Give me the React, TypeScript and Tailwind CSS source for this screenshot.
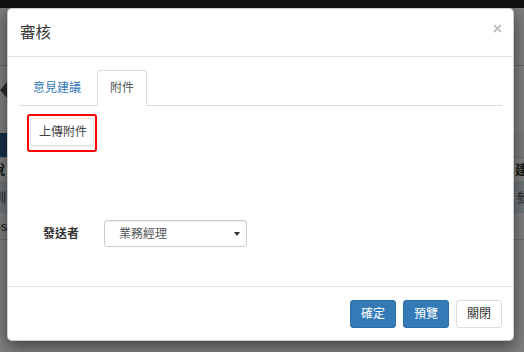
const tabs = [
  { label: '意見建議', active: false },
  { label: '附件', active: true },
];

const footerButtons = [
  { label: '確定', primary: true },
  { label: '預覽', primary: true },
  { label: '關閉', primary: false },
];

// page behind the dialog, only the edges of it show through the backdrop
function Backdrop() {
  return (
    <div className="flex h-full flex-col bg-white text-[13px] text-[#333]">
      <div className="h-[8px] bg-[#222]" />
      <div className="h-[58px] border-b border-[#ccc] bg-[#f8f8f8]" />
      <div className="flex h-[67px] items-start pt-[16px]">
        <div className="h-0 w-0 border-y-[8px] border-r-[7px] border-y-transparent border-r-[#555]" />
      </div>
      <div className="flex h-[25px] border-b border-[#ddd]">
        <div className="w-[14px] bg-[#2a5f8f]" />
        <div className="flex-1 bg-[#f5f5f5]" />
      </div>
      <div className="flex h-[23px] items-center justify-between font-bold leading-none">
        <span className="-ml-[8px]">說</span>
        <span className="-mr-[4px]">建</span>
      </div>
      <div className="flex h-[32px] items-center justify-between bg-[#dcebf3] leading-none text-[#555]">
        <span className="-ml-[7px]">訓</span>
        <span className="-mr-[5px]">參</span>
      </div>
      <div className="flex h-[27px] items-center border-b border-[#ddd] leading-none">
        <span className="-ml-[14px]">Yes</span>
      </div>
    </div>
  );
}

export default function App() {
  return (
    <div className="relative h-[352px] w-[524px] overflow-hidden font-['Liberation_Sans','Noto_Sans_CJK_TC',sans-serif]">
      <Backdrop />
      <div className="absolute inset-0 bg-black/50" />

      <div className="absolute inset-0 pl-[7px] pt-[8px]">
        <div className="flex h-[333px] w-[507px] flex-col rounded-[5px] border border-black/20 bg-white shadow-[0_5px_15px_rgba(0,0,0,0.5)]">
          {/* header */}
          <div className="flex h-[48px] shrink-0 items-center justify-between border-b border-[#e5e5e5] pl-[12px] pr-[11px]">
            <h4 className="text-[15.5px] leading-none text-[#333]">審核</h4>
            <svg width="9" height="9" viewBox="0 0 9 9" className="-mt-[8px]">
              <path d="M1 1L8 8M8 1L1 8" stroke="#c2c2c2" strokeWidth="2" />
            </svg>
          </div>

          {/* body */}
          <div className="flex-1 px-[11px] pt-[13px] text-[12px] text-[#333]">
            <ul className="flex border-b border-[#ddd]">
              {tabs.map(t => (
                <li key={t.label} className="-mb-px mr-[2px]">
                  <span
                    className={
                      t.active
                        ? 'flex h-[36px] items-center rounded-t-[3px] border border-[#ddd] border-b-white bg-white px-[12px] text-[#555]'
                        : 'flex h-[36px] items-center rounded-t-[3px] border border-transparent px-[13px] text-[#337ab7]'
                    }
                  >
                    {t.label}
                  </span>
                </li>
              ))}
            </ul>

            <div className="ml-[8px] mt-[8px] inline-block rounded-[3px] border-2 border-[#f00] pb-[4px] pl-px pr-px pt-[2px]">
              <button className="flex h-[28px] w-[64px] items-center justify-center rounded-[3px] border border-[#e3e3e3] bg-white pl-[2px] text-[12px] text-[#444] shadow-[0_1px_1px_rgba(0,0,0,0.08)]">
                上傳附件
              </button>
            </div>

            <div className="ml-[24px] mt-[68px] flex items-center">
              <label className="w-[61px] font-bold text-[#333]">發送者</label>
              <div className="flex h-[27px] w-[143px] items-center justify-between rounded-[3px] border border-[#ccc] pl-[14px] pr-[6px] text-[#555] shadow-[inset_0_1px_1px_rgba(0,0,0,0.075)]">
                <span>業務經理</span>
                <svg width="6" height="4" viewBox="0 0 6 4">
                  <path d="M0 0H6L3 4Z" fill="#333" />
                </svg>
              </div>
            </div>
          </div>

          {/* footer */}
          <div className="flex h-[54px] shrink-0 items-start justify-end gap-[7px] border-t border-[#e5e5e5] pr-[11px] pt-[13px]">
            {footerButtons.map(b => (
              <button
                key={b.label}
                className={
                  b.primary
                    ? 'flex h-[28px] w-[46px] items-center justify-center rounded-[3px] border border-[#2e6da4] bg-[#337ab7] text-[12px] text-white'
                    : 'flex h-[28px] w-[46px] items-center justify-center rounded-[3px] border border-[#ddd] bg-white text-[12px] text-[#333]'
                }
              >
                {b.label}
              </button>
            ))}
          </div>
        </div>
      </div>
    </div>
  );
}
